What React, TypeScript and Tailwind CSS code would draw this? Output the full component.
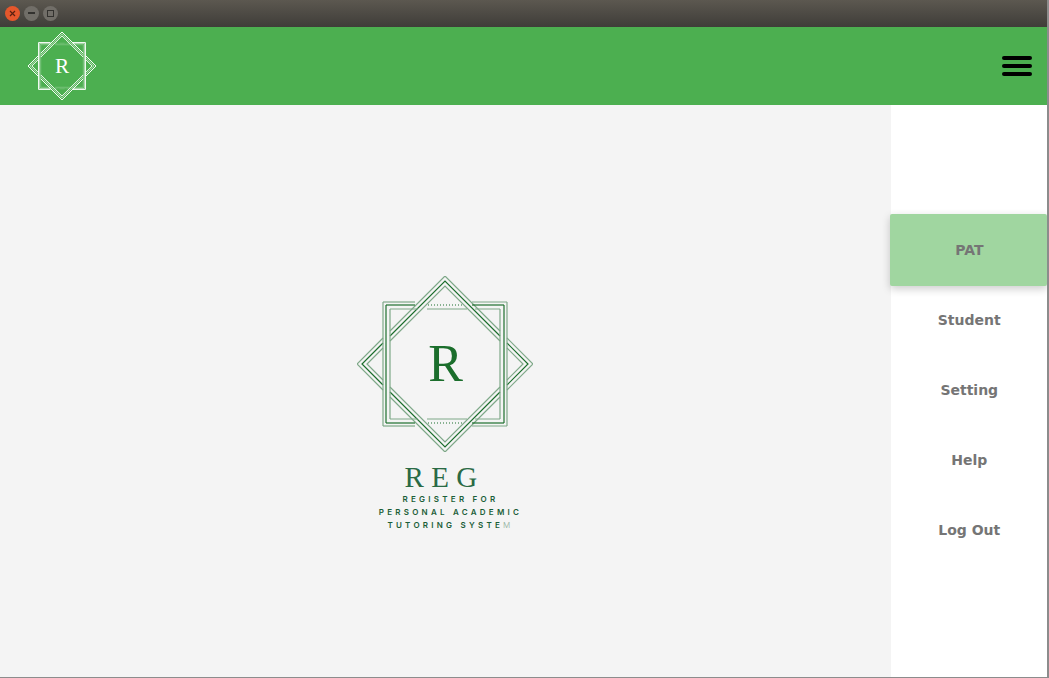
import React from "react";

function Emblem({ size, main, light, dark, inner, rSize, rY, sw, outer, mid }: { size: number; main: string; light: string; dark: string; inner: string; rSize: number; rY: number; sw: number; outer: number; mid: number }) {
  // coordinates are those of the big emblem, centred at 88,88
  const c = 88;
  const top = (d: number, cut: number) => `M${c - cut} ${c - (d - cut)} L${c} ${c - d} L${c + cut} ${c - (d - cut)}`;
  const bottom = (d: number, cut: number) => `M${c - cut} ${c + (d - cut)} L${c} ${c + d} L${c + cut} ${c + (d - cut)}`;
  const left = (d: number, cut: number) => `M${c - cut} ${c - (d - cut)} L${c - d} ${c} L${c - cut} ${c + (d - cut)}`;
  const right = (d: number, cut: number) => `M${c + cut} ${c - (d - cut)} L${c + d} ${c} L${c + cut} ${c + (d - cut)}`;
  const lines: [number, string][] = [
    [88, light],
    [83, dark],
    [78, light],
  ];
  const hSeg = (y: number, col: string, x1: number, x2: number, key: string) => (
    <path key={key} d={`M${x1} ${y} H${x2}`} stroke={col} strokeWidth={sw} />
  );
  return (
    <svg width={size} height={size} viewBox="0 0 176 176" fill="none">
      {lines.map(([d, col]) => (
        <g key={d} stroke={col} strokeWidth={sw}>
          <path d={top(d, 55)} />
          <path d={bottom(d, 55)} />
          <path d={left(d, 62)} />
          <path d={right(d, 62)} />
        </g>
      ))}
      {[
        { o: outer, col: light },
        { o: mid, col: dark },
      ].map(({ o, col }) => (
        <g key={o}>
          {hSeg(c - o, col, c - o, c - 30, `t1${o}`)}
          {hSeg(c - o, col, c + 27, c + o, `t2${o}`)}
          {hSeg(c + o, col, c - o, c - 30, `b1${o}`)}
          {hSeg(c + o, col, c + 27, c + o, `b2${o}`)}
          <path d={`M${c - o} ${c - o} V${c + o}`} stroke={col} strokeWidth={sw} />
          <path d={`M${c + o} ${c - o} V${c + o}`} stroke={col} strokeWidth={sw} />
        </g>
      ))}
      <path d={`M${c - 55} ${c - 55} V${c + 55} M${c + 55} ${c - 55} V${c + 55}`} stroke={inner} strokeWidth={sw} />
      <path d={`M${c - 55} ${c - 55} H${c - 27} M${c - 18} ${c - 55} H${c + 22} M${c + 30} ${c - 55} H${c + 55}`} stroke={inner} strokeWidth={sw} />
      <path d={`M${c - 55} ${c + 55} H${c - 27} M${c - 18} ${c + 55} H${c + 22} M${c + 30} ${c + 55} H${c + 55}`} stroke={inner} strokeWidth={sw} />
      <path d={`M${c - 17} ${c - 59} H${c + 17} M${c - 17} ${c + 59} H${c + 17}`} stroke={dark} strokeWidth={sw} strokeDasharray="1 2" />
      <text x={c + 0.5} y={rY} textAnchor="middle" fontFamily="'Liberation Serif', serif" fontSize={rSize} fill={main}>
        R
      </text>
    </svg>
  );
}

const items = ["PAT", "Student", "Setting", "Help", "Log Out"];

export default function App() {
  return (
    <div className="flex h-[678px] w-[1049px] flex-col overflow-hidden border-r-2 border-b border-[#8c8c8c] bg-white font-['DejaVu_Sans',sans-serif]">
      <div className="flex h-[27px] shrink-0 items-center gap-[4px] bg-gradient-to-b from-[#5c5850] to-[#3f3d39] pb-[1px] pl-[5px]">
        <div className="flex h-[15px] w-[15px] items-center justify-center rounded-full bg-[#e5572c] text-[#5a2010]">
          <svg width="7" height="7" viewBox="0 0 7 7" stroke="currentColor" strokeWidth="1.2">
            <path d="M1 1L6 6M6 1L1 6" />
          </svg>
        </div>
        <div className="flex h-[15px] w-[15px] items-center justify-center rounded-full bg-[#716e68]">
          <div className="h-[1.5px] w-[7px] bg-[#33322f]" />
        </div>
        <div className="flex h-[15px] w-[15px] items-center justify-center rounded-full bg-[#716e68]">
          <div className="h-[7px] w-[7px] border border-[#33322f]" />
        </div>
      </div>

      <div className="flex min-h-0 flex-1 flex-col">
        <header className="flex h-[78px] shrink-0 items-center justify-between bg-[#4caf50] pr-[15px] pl-[28px]">
          <Emblem size={68} main="#ffffff" light="#ffffff" dark="rgba(255,255,255,0.55)" inner="rgba(255,255,255,0.25)" rSize={55} rY={107} sw={2.5} outer={60.7} mid={58} />
          <div className="flex w-[30px] flex-col gap-[4px] pb-[1px]">
            <div className="h-[4px] rounded-full bg-black" />
            <div className="h-[4px] rounded-full bg-black" />
            <div className="h-[4px] rounded-full bg-black" />
          </div>
        </header>

        <div className="flex min-h-0 flex-1">
          <main className="flex flex-1 flex-col items-center bg-[#f4f4f4] pt-[170.5px] pr-px">
            <Emblem size={176} main="#1b6e2c" light="#7ea888" dark="#1b6e2c" inner="#7ea888" rSize={52} rY={105} sw={1.2} outer={62} mid={59} />
            <div className="mt-[10px] flex flex-col items-center text-center text-[#2a6a45]">
              <div className="mr-[1px] h-[31px] font-['Liberation_Serif',serif] text-[29px] leading-[31px] font-normal tracking-[7.3px]">REG</div>
              <div className="ml-[11px] font-['Inter',sans-serif] text-[8px] leading-[13px] font-semibold tracking-[3.25px] text-[#1b5e38]">
                <div>REGISTER FOR</div>
                <div>PERSONAL ACADEMIC</div>
                <div>
                  TUTORING SYSTE<span className="font-light text-[#8fae9b]">M</span>
                </div>
              </div>
            </div>
          </main>

          <nav className="w-[156px] shrink-0 bg-white pt-[109px]">
            {items.map((label, i) => (
              <div
                key={label}
                className={
                  i === 0
                    ? "relative -mb-px -ml-px flex h-[72px] items-center justify-center rounded-[2px] bg-[#a0d6a0] pl-[2px] text-[14px] font-bold text-[#757575] shadow-[0_3px_8px_rgba(0,0,0,0.2)]"
                    : "flex h-[70px] items-center justify-center pl-[0.5px] text-[14px] font-bold text-[#757575]"
                }
              >
                {label}
              </div>
            ))}
          </nav>
        </div>
      </div>
    </div>
  );
}
